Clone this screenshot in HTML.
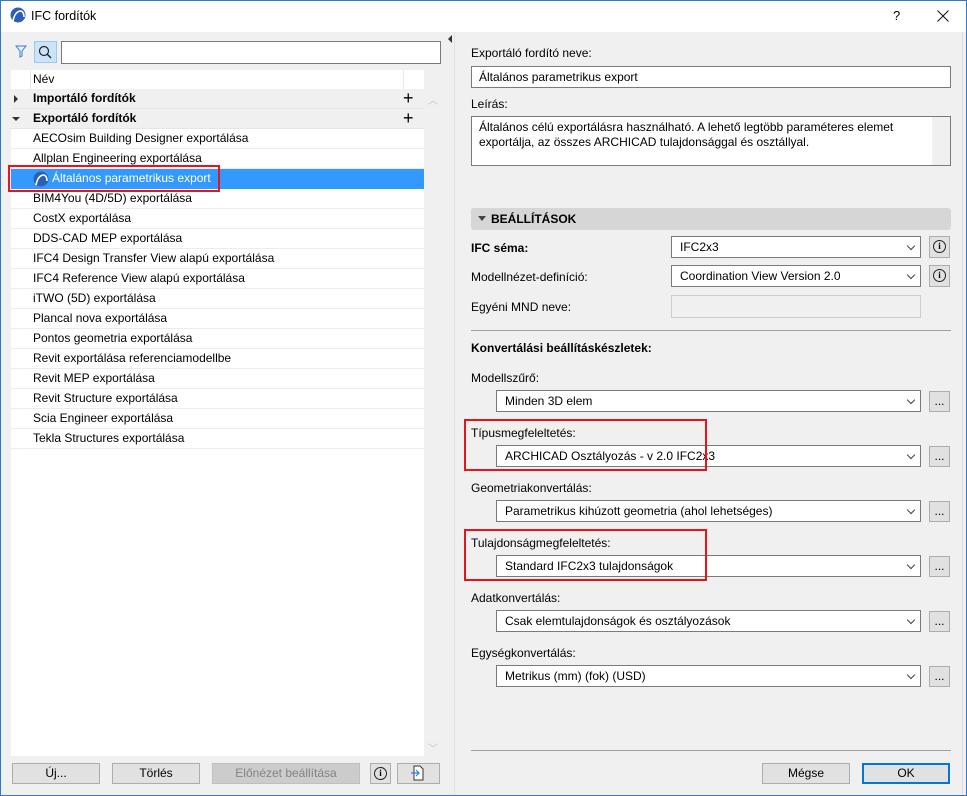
<!DOCTYPE html>
<html><head><meta charset="utf-8"><style>
*{box-sizing:border-box;margin:0;padding:0}
body{width:967px;height:796px;overflow:hidden;font-family:"Liberation Sans",sans-serif;font-size:12px;color:#000;background:#fff;position:relative}
.a{position:absolute}
.win{left:0;top:0;width:967px;height:796px;border:1px solid #2b79d0;background:#f0f0f0}
.title{left:1px;top:1px;width:965px;height:31px;background:#fff}
.row{position:absolute;left:11px;width:413px;height:20px;line-height:19px;border-bottom:1px solid #ececec;padding-left:22px;background:#fff;white-space:nowrap}
.grp{background:#f0f0f0;font-weight:bold;border-bottom:1px solid #e6e6e6}
.inp{position:absolute;background:#fff;border:1px solid #7a7a7a;height:22px;line-height:20px;padding-left:7px;white-space:nowrap}
.sel{position:absolute;background:#fff;border:1px solid #7a7a7a;height:22px;line-height:20px;padding-left:8px;white-space:nowrap}
.sel:after{content:"";position:absolute;right:6px;top:6px;width:5px;height:5px;border-right:1px solid #444;border-bottom:1px solid #444;transform:rotate(45deg)}
.btn{position:absolute;background:#e1e1e1;border:1px solid #adadad;height:21px;line-height:19px;text-align:center}
.lbl{position:absolute;white-space:nowrap}
.red{position:absolute;border:2px solid #e8141c}
.info{position:absolute;width:13px;height:13px;border:1px solid #222;border-radius:50%;font-size:9px;line-height:11px;text-align:center;font-weight:bold;font-family:"Liberation Serif",serif}
</style></head><body>
<div class="a win"></div>
<div class="a title"></div>
<svg class="a" style="left:10px;top:7px" width="16" height="16" viewBox="0 0 16 16"><circle cx="8" cy="8" r="7.5" fill="#2d5fb8"/><path d="M3 14 Q5 4 11 4 Q14 5 14 10" stroke="#fff" stroke-width="1.6" fill="none"/></svg>
<div class="lbl" style="left:31px;top:9px;font-size:12.5px">IFC fordítók</div>
<div class="lbl" style="left:893px;top:8px;font-size:13px">?</div>
<svg class="a" style="left:937px;top:10px" width="12" height="12" viewBox="0 0 12 12"><path d="M0.5 0.5L11.5 11.5M11.5 0.5L0.5 11.5" stroke="#111" stroke-width="1"/></svg>

<!-- left panel -->
<svg class="a" style="left:15px;top:45px" width="12" height="13" viewBox="0 0 12 13"><path d="M1 1H11L7 6V11L5 12V6Z" fill="none" stroke="#2d7fd6" stroke-width="1"/></svg>
<div class="a" style="left:34px;top:41px;width:23px;height:22px;background:#cce4f7;border:1px solid #99c9ef"></div>
<svg class="a" style="left:38px;top:45px" width="14" height="14" viewBox="0 0 14 14"><circle cx="6" cy="6" r="4.5" fill="none" stroke="#222" stroke-width="1.2"/><path d="M9.3 9.3L13 13" stroke="#222" stroke-width="1.4"/></svg>
<div class="inp" style="left:61px;top:41px;width:380px;height:23px"></div>

<div class="a" style="left:11px;top:70px;width:413px;height:686px;background:#fff"></div>
<div class="row" style="top:70px;height:19px;border-bottom:none">Név</div>
<div class="a" style="left:30px;top:70px;width:1px;height:19px;background:#e8e8e8"></div>
<div class="a" style="left:403px;top:70px;width:1px;height:19px;background:#e8e8e8"></div>
<div class="row grp" style="top:89px">Importáló fordítók</div>
<div class="row grp" style="top:109px">Exportáló fordítók</div>
<svg class="a" style="left:13px;top:95px" width="6" height="8"><path d="M1 0L5 4L1 8Z" fill="#333"/></svg>
<svg class="a" style="left:12px;top:116px" width="8" height="6"><path d="M0 1H8L4 5Z" fill="#333"/></svg>
<div class="lbl" style="left:403px;top:88px;font-size:18px;font-weight:300">+</div>
<div class="lbl" style="left:403px;top:108px;font-size:18px;font-weight:300">+</div>
<div class="lbl" style="left:428px;top:92px;color:#c0c0c0;font-size:10px">︿</div>
<div class="lbl" style="left:428px;top:740px;color:#c0c0c0;font-size:10px">﹀</div>
<div class="row" style="top:129px">AECOsim Building Designer exportálása</div>
<div class="row" style="top:149px">Allplan Engineering exportálása</div>
<div class="row" style="top:169px;background:#3399ff;color:#fff;padding-left:41px;border-bottom:none">Általános parametrikus export</div>
<svg class="a" style="left:33px;top:171px" width="16" height="16" viewBox="0 0 16 16"><circle cx="8" cy="8" r="7.5" fill="#2d5fb8"/><path d="M3 14 Q5 4 11 4 Q14 5 14 10" stroke="#fff" stroke-width="1.6" fill="none"/></svg>
<div class="row" style="top:189px">BIM4You (4D/5D) exportálása</div>
<div class="row" style="top:209px">CostX exportálása</div>
<div class="row" style="top:229px">DDS-CAD MEP exportálása</div>
<div class="row" style="top:249px">IFC4 Design Transfer View alapú exportálása</div>
<div class="row" style="top:269px">IFC4 Reference View alapú exportálása</div>
<div class="row" style="top:289px">iTWO (5D) exportálása</div>
<div class="row" style="top:309px">Plancal nova exportálása</div>
<div class="row" style="top:329px">Pontos geometria exportálása</div>
<div class="row" style="top:349px">Revit exportálása referenciamodellbe</div>
<div class="row" style="top:369px">Revit MEP exportálása</div>
<div class="row" style="top:389px">Revit Structure exportálása</div>
<div class="row" style="top:409px">Scia Engineer exportálása</div>
<div class="row" style="top:429px">Tekla Structures exportálása</div>
<div class="red" style="left:8px;top:165px;width:212px;height:27px"></div>

<div class="btn" style="left:12px;top:763px;width:88px">Új...</div>
<div class="btn" style="left:112px;top:763px;width:88px">Törlés</div>
<div class="btn" style="left:212px;top:763px;width:148px;background:#cccccc;border-color:#bfbfbf;color:#838383">Előnézet beállítása</div>
<div class="btn" style="left:370px;top:763px;width:21px"></div>
<div class="info" style="left:374px;top:767px">i</div>
<div class="btn" style="left:397px;top:763px;width:43px"></div>
<svg class="a" style="left:411px;top:765px" width="14" height="17" viewBox="0 0 14 17"><path d="M3 1H9L12 4V15H3Z" fill="#fff" stroke="#333"/><path d="M0 8H8M5 5L8 8L5 11" stroke="#2d7fd6" fill="none" stroke-width="1.2"/></svg>

<!-- divider -->
<div class="a" style="left:447px;top:32px;width:8px;height:763px;background:#f0f0f0;border-right:1px solid #e3e3e3"></div>
<svg class="a" style="left:448px;top:35px" width="5" height="8"><path d="M4 0L0 4L4 8Z" fill="#333"/></svg>
<div class="a" style="left:962px;top:32px;width:1px;height:763px;background:#dcdcdc"></div>

<!-- right panel -->
<div class="lbl" style="left:471px;top:46px">Exportáló fordító neve:</div>
<div class="inp" style="left:471px;top:66px;width:480px">Általános parametrikus export</div>
<div class="lbl" style="left:471px;top:97px">Leírás:</div>
<div class="inp" style="left:471px;top:116px;width:480px;height:50px;line-height:15px;padding-top:3px;white-space:normal;padding-right:30px">Általános célú exportálásra használható. A lehető legtöbb paraméteres elemet exportálja, az összes ARCHICAD tulajdonsággal és osztállyal.</div>
<div class="a" style="left:932px;top:117px;width:18px;height:48px;background:#f0f0f0"></div>

<div class="a" style="left:471px;top:208px;width:480px;height:22px;background:#d6d6d6;border-radius:3px"></div>
<svg class="a" style="left:478px;top:216px" width="8" height="6"><path d="M0 0H8L4 5Z" fill="#444"/></svg>
<div class="lbl" style="left:491px;top:212px;font-weight:bold">BEÁLLÍTÁSOK</div>

<div class="lbl" style="left:471px;top:241px;font-weight:bold">IFC séma:</div>
<div class="sel" style="left:671px;top:236px;width:250px">IFC2x3</div>
<div class="btn" style="left:929px;top:236px;width:21px;height:22px"></div>
<div class="info" style="left:933px;top:240px">i</div>
<div class="lbl" style="left:471px;top:270px">Modellnézet-definíció:</div>
<div class="sel" style="left:671px;top:265px;width:250px">Coordination View Version 2.0</div>
<div class="btn" style="left:929px;top:265px;width:21px;height:22px"></div>
<div class="info" style="left:933px;top:269px">i</div>
<div class="lbl" style="left:471px;top:300px">Egyéni MND neve:</div>
<div class="a" style="left:671px;top:295px;width:250px;height:23px;background:#f0f0f0;border:1px solid #cccccc"></div>
<div class="a" style="left:471px;top:330px;width:480px;height:1px;background:#a0a0a0"></div>
<div class="lbl" style="left:471px;top:341px;font-weight:bold">Konvertálási beállításkészletek:</div>

<div class="lbl" style="left:471px;top:371px">Modellszűrő:</div>
<div class="sel" style="left:496px;top:390px;width:425px">Minden 3D elem</div>
<div class="btn" style="left:929px;top:391px;width:21px">...</div>
<div class="lbl" style="left:471px;top:426px">Típusmegfeleltetés:</div>
<div class="sel" style="left:496px;top:445px;width:425px">ARCHICAD Osztályozás - v 2.0 IFC2x3</div>
<div class="btn" style="left:929px;top:446px;width:21px">...</div>
<div class="lbl" style="left:471px;top:481px">Geometriakonvertálás:</div>
<div class="sel" style="left:496px;top:500px;width:425px">Parametrikus kihúzott geometria (ahol lehetséges)</div>
<div class="btn" style="left:929px;top:501px;width:21px">...</div>
<div class="lbl" style="left:471px;top:536px">Tulajdonságmegfeleltetés:</div>
<div class="sel" style="left:496px;top:555px;width:425px">Standard IFC2x3 tulajdonságok</div>
<div class="btn" style="left:929px;top:556px;width:21px">...</div>
<div class="lbl" style="left:471px;top:591px">Adatkonvertálás:</div>
<div class="sel" style="left:496px;top:610px;width:425px">Csak elemtulajdonságok és osztályozások</div>
<div class="btn" style="left:929px;top:611px;width:21px">...</div>
<div class="lbl" style="left:471px;top:646px">Egységkonvertálás:</div>
<div class="sel" style="left:496px;top:665px;width:425px">Metrikus (mm) (fok) (USD)</div>
<div class="btn" style="left:929px;top:666px;width:21px">...</div>

<div class="red" style="left:464px;top:419px;width:243px;height:52px"></div>
<div class="red" style="left:464px;top:529px;width:243px;height:52px"></div>

<div class="a" style="left:471px;top:750px;width:480px;height:1px;background:#a0a0a0"></div>
<div class="btn" style="left:762px;top:763px;width:88px">Mégse</div>
<div class="btn" style="left:862px;top:763px;width:88px;border:2px solid #0078d7;line-height:17px">OK</div>
</body></html>
